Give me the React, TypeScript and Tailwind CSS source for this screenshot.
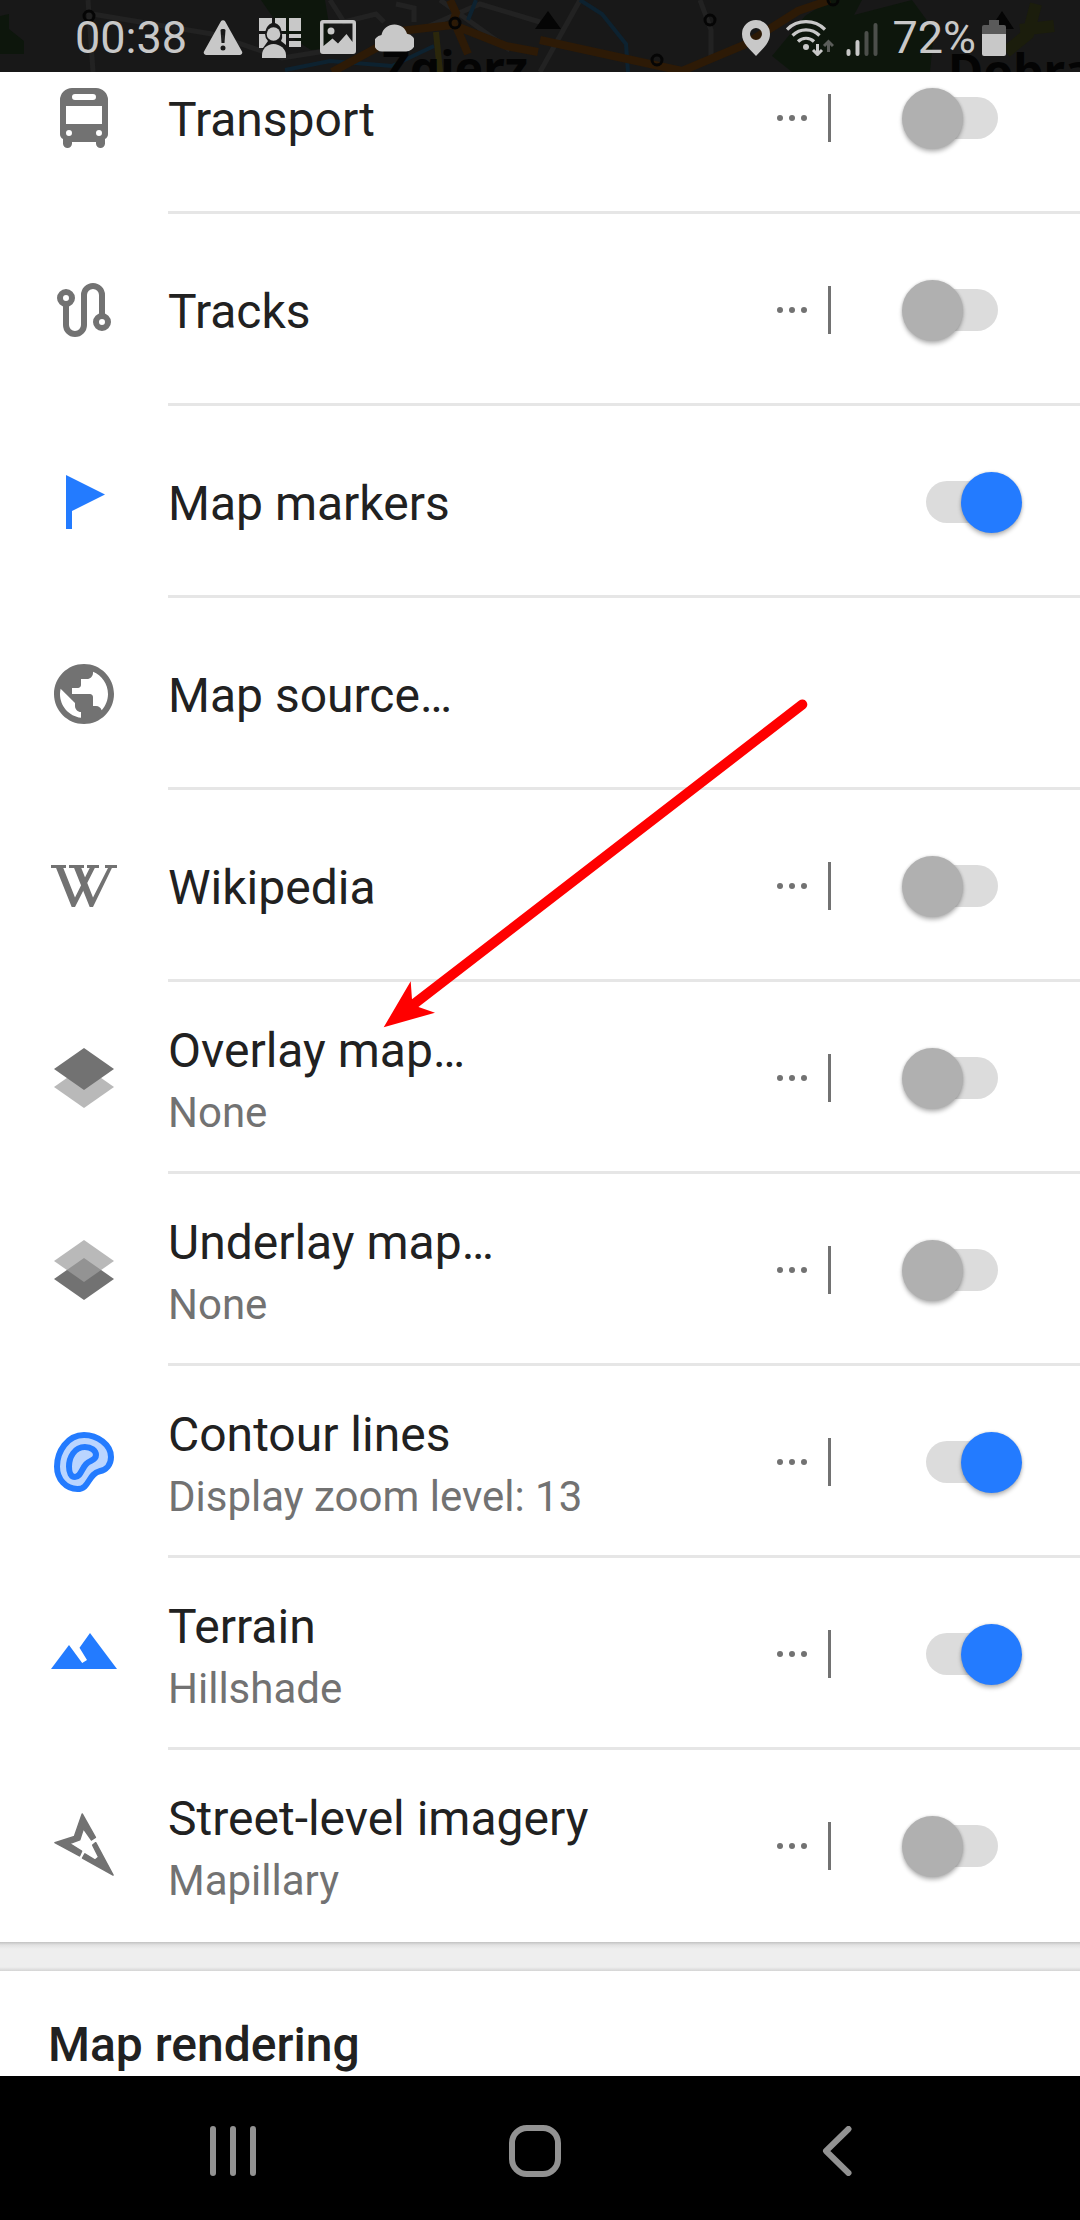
import { useState, type ReactNode } from "react";

const GREY = "#727272";
const BLUE = "#237bff";

function RowIcon({ color = GREY, children }: { color?: string; children: ReactNode }) {
  return (
    <svg viewBox="0 0 24 24" className="size-18" fill={color} aria-hidden="true">
      {children}
    </svg>
  );
}

const busIcon = (
  <RowIcon>
    <path
      fillRule="evenodd"
      d="M8 2h8a4 4 0 0 1 4 4v11.4c0 .7-.4 1.3-1 1.6v1.5a1.5 1.5 0 0 1-3 0V20H8v.5a1.5 1.5 0 0 1-3 0V19c-.6-.3-1-.9-1-1.600V6a4 4 0 0 1 4-4zM9 4a1 1 0 0 0 0 2h6a1 1 0 0 0 0-2zM6 8v6h12V8zM7 16a1 1 0 1 0 0 2 1 1 0 0 0 0-2zM17 16a1 1 0 1 0 0 2 1 1 0 0 0 0-2z"
    />
  </RowIcon>
);

const tracksIcon = (
  <RowIcon>
    <g fill="none" stroke={GREY} strokeWidth="2">
      <circle cx="6" cy="8" r="2" />
      <circle cx="18" cy="16" r="2" />
      <path d="M6 10v7a3 3 0 0 0 6 0V7a3 3 0 0 1 6 0v7" />
    </g>
  </RowIcon>
);

const flagIcon = (
  <RowIcon color={BLUE}>
    <path d="M6 3l13 6.500L8 15v6H6z" />
  </RowIcon>
);

const globeIcon = (
  <RowIcon>
    <path d="M12 2C6.480 2 2 6.480 2 12s4.480 10 10 10 10-4.480 10-10S17.520 2 12 2zm-1 17.930c-3.950-.490-7-3.850-7-7.930 0-.620.080-1.210.210-1.790L9 15v1c0 1.100.900 2 2 2v1.930zm6.900-2.540c-.260-.810-1-1.390-1.900-1.390h-1v-3c0-.550-.450-1-1-1H8v-2h2c.550 0 1-.450 1-1V7h2c1.100 0 2-.900 2-2v-.410c2.930 1.190 5 4.060 5 7.410 0 2.080-.800 3.970-2.100 5.390z" />
  </RowIcon>
);

const wikipediaIcon = (
  <RowIcon>
    <path d="M1 5h5v1h-.9L9 15.800 13.900 6H13V5h4v1h-1.400L9 19H7.900L2.700 6H1z" />
    <path d="M7 5h5v1h-.9L15 15.800 20 6h-1V5h4v1h-1.700L15 19h-1.100L8.700 6H7z" />
  </RowIcon>
);

const overlayIcon = (
  <RowIcon>
    <path fill="#b9b9b9" d="M12 8l10 7-10 7-10-7z" />
    <path d="M12 2l10 7-10 7L2 9z" />
  </RowIcon>
);

const underlayIcon = (
  <RowIcon>
    <path d="M12 8l10 7-10 7-10-7z" />
    <path fill="#9f9f9f" fillOpacity=".73" d="M12 2l10 7-10 7L2 9z" />
  </RowIcon>
);

const contourIcon = (
  <RowIcon>
    <g fill="#bad5ff" stroke={BLUE} strokeWidth="2" strokeLinejoin="round">
      <path d="M12 3C16.500 3 21 6.300 21 10.300C21 12.900 19.400 14.600 17.200 15.100C13.300 16 13.900 21 9.800 21C6 21 3 17.800 3 13.500C3 8.500 6.500 3 12 3Z" />
      <path d="M12.300 7C14.300 7 16 8.100 16 9.700C16 11.600 14 11.300 12.700 12.700C11.200 14.300 10.800 17 9 17C7.700 17 7 15.500 7 13.500C7 10.500 8.800 7 12.300 7Z" />
    </g>
  </RowIcon>
);

const terrainIcon = (
  <RowIcon color={BLUE}>
    <path d="M1 17L7 9l4.400 6 1.600-1-2.500-4.100L14 5l9 12z" />
  </RowIcon>
);

const mapillaryIcon = (
  <RowIcon>
    <g stroke={GREY} strokeWidth=".5" strokeLinejoin="round">
      <path d="M11.400 1.300L15.800 9.100 14.500 10 11.800 6.200 10.600 9.900 7.200 11.200 11.200 13.700 10.500 15.300 2.300 10.900 8.800 8.800z" />
      <path d="M15.900 10.900L21.700 21.700 11.500 16 12.300 14.600 15.700 16.700 16.900 15.700 14.900 11.700z" />
    </g>
  </RowIcon>
);

type Layer = {
  id: string;
  title: string;
  note?: string;
  icon: ReactNode;
  menu?: boolean;
  on?: boolean;
};

const layers: Layer[] = [
  { id: "transport", title: "Transport", icon: busIcon, menu: true, on: false },
  { id: "tracks", title: "Tracks", icon: tracksIcon, menu: true, on: false },
  { id: "markers", title: "Map markers", icon: flagIcon, on: true },
  { id: "source", title: "Map source…", icon: globeIcon },
  { id: "wikipedia", title: "Wikipedia", icon: wikipediaIcon, menu: true, on: false },
  { id: "overlay", title: "Overlay map…", note: "None", icon: overlayIcon, menu: true, on: false },
  { id: "underlay", title: "Underlay map…", note: "None", icon: underlayIcon, menu: true, on: false },
  { id: "contour", title: "Contour lines", note: "Display zoom level: 13", icon: contourIcon, menu: true, on: true },
  { id: "terrain", title: "Terrain", note: "Hillshade", icon: terrainIcon, menu: true, on: true },
  { id: "street", title: "Street-level imagery", note: "Mapillary", icon: mapillaryIcon, menu: true, on: false },
];

function LayerRow({ layer }: { layer: Layer }) {
  const [on, setOn] = useState(layer.on ?? false);
  const hasSwitch = layer.on !== undefined;
  const text = (
    <>
      <span className="block text-[48px] leading-14 text-[#212121]">{layer.title}</span>
      {layer.note && <span className="mt-2.5 block text-[42px] leading-12 text-[#727272]">{layer.note}</span>}
    </>
  );
  return (
    <li className="group flex h-48">
      <div className="flex w-42 shrink-0 items-center pl-12">{layer.icon}</div>
      <div className="flex min-w-0 flex-1 items-center pr-[82px] shadow-[inset_0_-3px_0_#e6e6e6] group-last:shadow-none">
        {hasSwitch ? (
          <label htmlFor={layer.id} className="min-w-0 flex-1 pt-1">
            {text}
          </label>
        ) : (
          <button type="button" className="min-w-0 flex-1 pt-1 text-left">
            {text}
          </button>
        )}
        {layer.menu && (
          <>
            <button type="button" aria-label={`${layer.title} options`} className="flex h-12 items-center gap-1.5">
              <span className="size-1.5 rounded-full bg-[#727272]" />
              <span className="size-1.5 rounded-full bg-[#727272]" />
              <span className="size-1.5 rounded-full bg-[#727272]" />
            </button>
            <span className="ml-[21px] h-12 w-[3px] bg-[#727272]" />
          </>
        )}
        {hasSwitch && (
          <input
            id={layer.id}
            type="checkbox"
            role="switch"
            checked={on}
            onChange={(e) => setOn(e.target.checked)}
            className="relative ml-[95px] h-[42px] w-18 shrink-0 appearance-none rounded-full bg-[#dcdcdc] before:absolute before:-top-[9px] before:-left-6 before:size-[61px] before:rounded-full before:bg-[#b0b0b0] before:shadow-[0_3px_4px_rgba(0,0,0,0.26),0_0_3px_rgba(0,0,0,0.14)] checked:before:left-[35px] checked:before:bg-[#237bff]"
          />
        )}
      </div>
    </li>
  );
}

function MapStrip() {
  return (
    <svg
      viewBox="0 0 1080 72"
      preserveAspectRatio="xMidYMin slice"
      className="absolute inset-0 size-full"
      fill="none"
      aria-hidden="true"
    >
      <rect width="1080" height="72" fill="#181818" />
      <path d="M0 16l9-2v15l15 12v13H0zM261 0h64l8 48-22 2-28-18z" fill="#0d160c" />
      <path d="M805 16l25-16h32l-8 15 58-15 22 30-4 42H792l-20-16z" fill="#0d160c" />
      <g stroke="#222" strokeWidth="5">
        <path d="M88 0l5 72M92 14l120 20 70 24 50-8M330 0l14 22 32-8 8 8M420 30l60-26 60 18M440 0l70 50M396 4l18 4v14M700 0l11 30v27M580 0l-40 72" />
      </g>
      <path d="M285 70l45-9 62 5 42-20M468 20l8-20M580 0l22 14 24 30 2 28" stroke="#0d2230" strokeWidth="4" />
      <path d="M332 72l48-26M400 31l52-6 4-12-6-13M456 26l50 20 32 6M456 26l12 28M540 40l142 31 62-26 54-34 32-11" stroke="#2d1a06" strokeWidth="8" />
      <path d="M436 32l4 40" stroke="#2b270b" strokeWidth="6" />
      <path d="M1036 4l-8 30 -22 18M1020 30l34-4" stroke="#1b1d0c" strokeWidth="12" />
      <g stroke="#050505" strokeWidth="3">
        <circle cx="89" cy="16" r="5" />
        <circle cx="455" cy="23" r="5" />
        <circle cx="710" cy="20" r="5" />
        <circle cx="657" cy="60" r="5" />
        <circle cx="833" cy="0" r="5" />
      </g>
      <path d="M548 11l13 18h-26zM1002 11l12 18h-24z" fill="#050505" />
      <g fill="#040404" fontFamily="'Noto Sans', sans-serif" fontWeight="700" fontSize="48">
        <text x="382" y="86">Zgierz</text>
        <text x="948" y="89">Dobra</text>
      </g>
    </svg>
  );
}

function StatusBar() {
  return (
    <header className="relative z-10 h-18 overflow-hidden bg-[#181818] text-[#c8c8c8]">
      <MapStrip />
      <div className="relative flex h-full items-center justify-between pt-1 pr-[74px] pl-[75px]">
        <div className="flex items-center">
          <span className="text-[45px] leading-[68px]">00:38</span>
          <svg viewBox="0 0 40 40" className="ml-4 size-10" aria-hidden="true">
            <path
              fill="currentColor"
              fillRule="evenodd"
              d="M17.800 3.500a2.600 2.600 0 0 1 4.400 0L39 33.500a2.400 2.400 0 0 1-2 3.500H3a2.400 2.400 0 0 1-2-3.500zM17.500 12l1 13h3l1-13c0-1.500-5-1.500-5 0zM20 27.500a2.500 2.500 0 1 0 0 5 2.500 2.500 0 0 0 0-5z"
            />
          </svg>
          <svg viewBox="0 0 42 40" className="ml-4 h-10 w-[42px]" fill="currentColor" aria-hidden="true">
            <path d="M0 0h13v5a11 11 0 0 0-6.500 8H0zM16 0h11v13h-4.500A10 10 0 0 0 16 5zM30 0h12v13H30zM0 16h6a10 10 0 0 0 3 7l-5 7H0zM23 16h4v11l-5-4a10 10 0 0 0 1-7zM30 16h12v4H30zM30 23h12v6H30z" />
            <circle cx="14.500" cy="16" r="6.800" />
            <path d="M3 40v-3c0-6 5-11 11.500-11S27 31 27 37v3z" />
          </svg>
          <svg viewBox="0 0 36 36" className="ml-[19px] size-9" aria-hidden="true">
            <path
              fill="currentColor"
              fillRule="evenodd"
              d="M3 0h30a3 3 0 0 1 3 3v28a3 3 0 0 1-3 3H3a3 3 0 0 1-3-3V3a3 3 0 0 1 3-3zM3.500 3.500V26l9-7.500 5.500 5L26.500 14l6 8V3.500zM11 7.500a3.500 3.500 0 1 1 0 7 3.500 3.500 0 0 1 0-7z"
            />
          </svg>
          <svg viewBox="0 0 39 28" className="ml-[19px] h-7 w-[39px]" fill="currentColor" aria-hidden="true">
            <path d="M8 27.500a8 8 0 0 1-1.500-16.400C7.500 5 13 .5 19.500.5c6 0 11 3.500 12.500 9.300A8.900 8.900 0 0 1 30 27.500z" />
          </svg>
        </div>
        <div className="flex items-center">
          <svg viewBox="0 0 28 36" className="h-9 w-7" aria-hidden="true">
            <path
              fill="currentColor"
              fillRule="evenodd"
              d="M14 0a14 14 0 0 1 14 14c0 9.500-8 15-14 22C8 29 0 23.500 0 14A14 14 0 0 1 14 0zm0 8a6 6 0 1 0 0 12 6 6 0 0 0 0-12z"
            />
          </svg>
          <svg viewBox="0 0 48 36" className="ml-4 h-9 w-12" fill="none" aria-hidden="true">
            <g stroke="currentColor" strokeWidth="3.200">
              <path d="M1 9.500a27 27 0 0 1 38 0M6.500 15.500a19 19 0 0 1 27 0M12 21.500a11.500 11.500 0 0 1 16 0" />
            </g>
            <circle cx="20" cy="27" r="3" fill="currentColor" />
            <path d="M31.500 24v10M27 30l4.500 4.500L36 30" stroke="currentColor" strokeWidth="3" />
            <path d="M42.500 32V22M38 26l4.500-4.500L47 26" stroke="#5b5d5a" strokeWidth="3" />
          </svg>
          <svg viewBox="0 0 32 36" className="ml-3 h-9 w-8" strokeWidth="4" strokeLinecap="round" aria-hidden="true">
            <path d="M2.500 31v3M11.500 22v12" stroke="currentColor" />
            <path d="M20.500 13v21M29.500 5v29" stroke="#4c4f4b" />
          </svg>
          <span className="ml-3.5 text-[45px] leading-[68px]">72%</span>
          <svg viewBox="0 0 24 36" className="ml-1.5 h-9 w-6" aria-hidden="true">
            <path fill="#5a5a5a" d="M7 0h10v5h5a2 2 0 0 1 2 2v7H0V7a2 2 0 0 1 2-2h5z" />
            <path fill="currentColor" d="M0 14h24v20a2 2 0 0 1-2 2H2a2 2 0 0 1-2-2z" />
          </svg>
        </div>
      </div>
    </header>
  );
}

function NavBar() {
  return (
    <nav className="relative grid h-36 grid-cols-3 bg-black pt-1.5 pr-[92px] pl-[82px] text-[#929292]">
      <button type="button" aria-label="Recent apps" className="flex items-center justify-center">
        <svg viewBox="0 0 46 50" className="h-[50px] w-[46px]" fill="currentColor" aria-hidden="true">
          <rect width="6" height="50" rx="3" />
          <rect x="20" width="6" height="50" rx="3" />
          <rect x="40" width="6" height="50" rx="3" />
        </svg>
      </button>
      <button type="button" aria-label="Home" className="flex items-center justify-center">
        <span className="size-[52px] rounded-[18px] border-6 border-current" />
      </button>
      <button type="button" aria-label="Back" className="flex items-center justify-center">
        <svg viewBox="0 0 30 50" className="h-[50px] w-[30px]" fill="none" aria-hidden="true">
          <path d="M26.500 3L4 25l22.500 22" stroke="currentColor" strokeWidth="6" strokeLinecap="round" strokeLinejoin="round" />
        </svg>
      </button>
    </nav>
  );
}

export default function App() {
  return (
    <div className="relative flex min-h-screen flex-col bg-white font-[Roboto,sans-serif]">
      <StatusBar />
      <main className="flex flex-1 flex-col overflow-hidden">
        <ul className="-mt-[50px]">
          {layers.map((layer) => (
            <LayerRow key={layer.id} layer={layer} />
          ))}
        </ul>
        <div className="h-[29px] bg-[linear-gradient(to_bottom,#c2c2c2_0,#e2e2e2_3px,#eeeeee_7px,#eeeeee_25px,#d4d4d4_100%)]" />
        <section className="flex-1 px-12 pt-[46px]">
          <h2 className="text-[48px] leading-14 font-medium text-[#212121]">Map rendering</h2>
        </section>
      </main>
      <NavBar />
      <svg
        viewBox="380 696 432 336"
        className="pointer-events-none absolute top-[696px] left-[380px] h-[336px] w-[432px]"
        aria-hidden="true"
      >
        <path d="M802.300 704.500L414 1004" stroke="#ff0000" strokeWidth="10" strokeLinecap="round" />
        <path d="M383.700 1027.300L410.700 981.300 412 999.500 418.500 1007 435 1012.700z" fill="#ff0000" />
      </svg>
    </div>
  );
}
